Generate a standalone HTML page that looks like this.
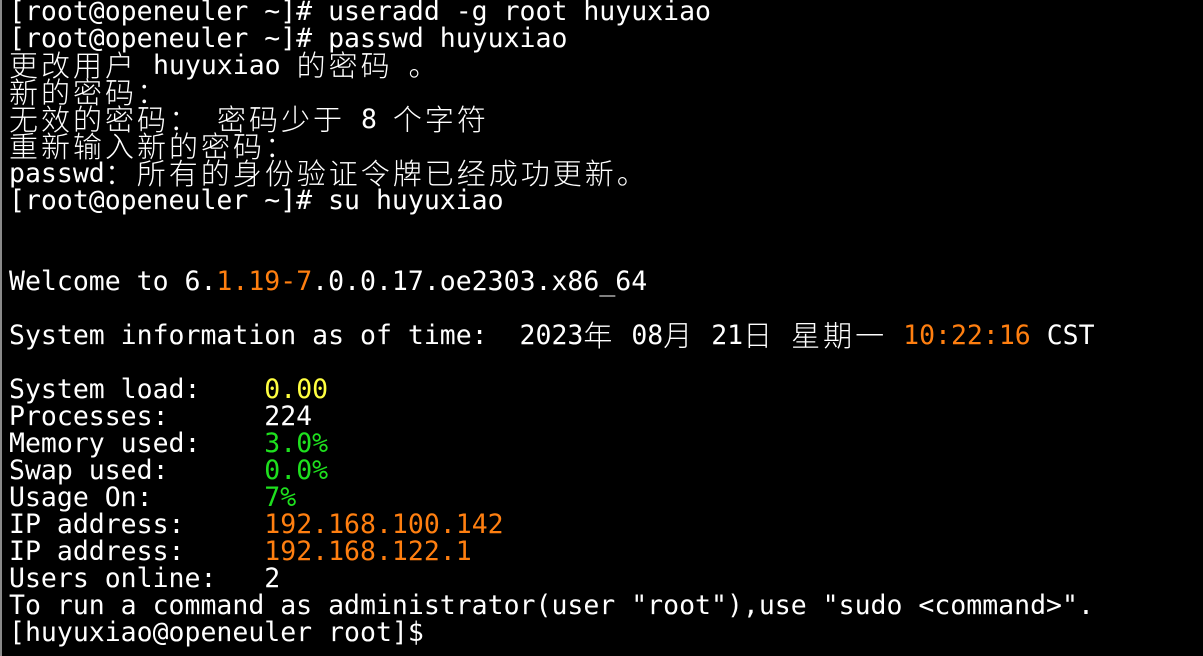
<!DOCTYPE html>
<html><head><meta charset="utf-8"><style>
html,body{margin:0;padding:0;background:#000;width:1203px;height:656px;overflow:hidden}
body{position:relative}
.bl{position:absolute;left:0;top:0;width:2px;height:656px;background:#8a8a8a}
.t{position:absolute;left:9px;top:-2px;font-family:"DejaVu Sans Mono","Liberation Mono",monospace;font-size:26.5px;color:#fff;white-space:pre}
.t div{height:27px;line-height:27px;overflow:visible}
.c{font-family:"Noto Sans CJK SC","WenQuanYi Zen Hei",sans-serif;font-size:29px;letter-spacing:3px;font-weight:300;line-height:0;position:relative;top:2px}
.o{color:#ff7f10}.y{color:#ffff40}.g{color:#1ee01e}
</style></head><body><div class="bl"></div>
<div class="t"><div>[root@openeuler ~]# useradd -g root huyuxiao</div><div>[root@openeuler ~]# passwd huyuxiao</div><div><span class="c">更改用户</span> huyuxiao <span class="c">的密码</span> <span class="c">。</span></div><div><span class="c">新的密码：</span></div><div><span class="c">无效的密码：</span> <span class="c">密码少于</span> 8 <span class="c">个字符</span></div><div><span class="c">重新输入新的密码：</span></div><div>passwd<span class="c">：所有的身份验证令牌已经成功更新。</span></div><div>[root@openeuler ~]# su huyuxiao</div><div></div><div></div><div>Welcome to 6.<span class="o">1.19-7</span>.0.0.17.oe2303.x86_64</div><div></div><div>System information as of time:  2023<span class="c">年</span> 08<span class="c">月</span> 21<span class="c">日</span> <span class="c">星期一</span> <span class="o">10:22:16</span> CST</div><div></div><div>System load:    <span class="y">0.00</span></div><div>Processes:      224</div><div>Memory used:    <span class="g">3.0%</span></div><div>Swap used:      <span class="g">0.0%</span></div><div>Usage On:       <span class="g">7%</span></div><div>IP address:     <span class="o">192.168.100.142</span></div><div>IP address:     <span class="o">192.168.122.1</span></div><div>Users online:   2</div><div>To run a command as administrator(user "root"),use "sudo &lt;command&gt;".</div><div>[huyuxiao@openeuler root]$</div></div>
</body></html>
